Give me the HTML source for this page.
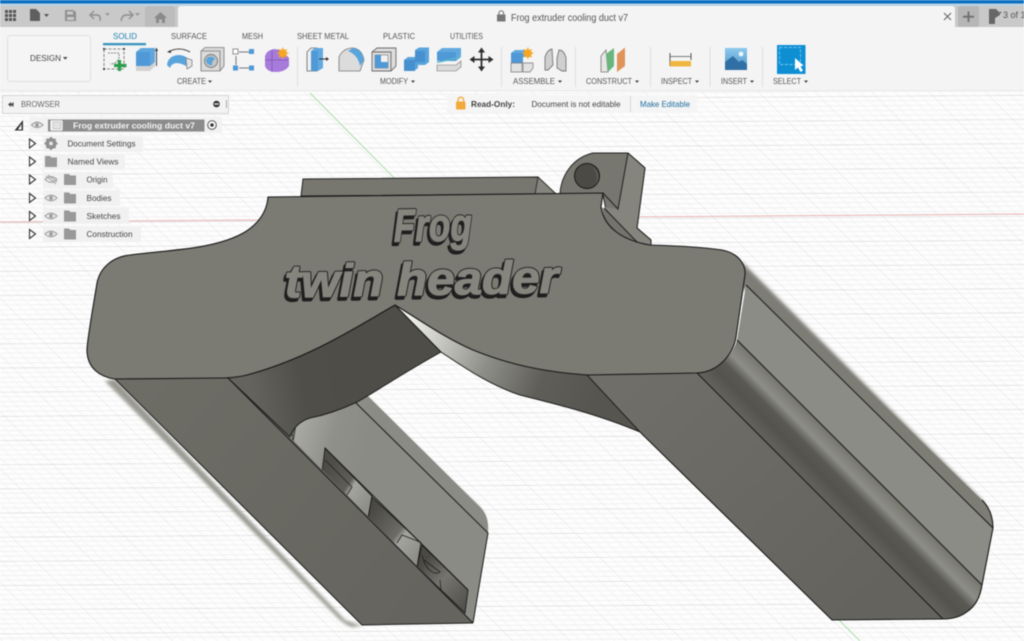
<!DOCTYPE html>
<html><head><meta charset="utf-8"><style>
html,body{margin:0;padding:0;background:#fff;width:1024px;height:641px;overflow:hidden}
svg{display:block;filter:blur(.45px)}
text{font-family:"Liberation Sans",sans-serif}
.l{font-size:8.5px;fill:#555}
.t{font-size:8.5px;fill:#555}
.b{font-size:8.5px;fill:#444}
</style></head><body>
<svg width="1024" height="641" viewBox="0 0 1024 641" xmlns="http://www.w3.org/2000/svg">
<defs>
<pattern id="grid" width="56.36" height="24" patternUnits="userSpaceOnUse" patternTransform="matrix(1 -0.0068 1 1 47 5)">
<g stroke="#eeeeee" stroke-width=".7" fill="none">
<path d="M0,4.8H56.36M0,9.6H56.36M0,14.4H56.36M0,19.2H56.36"/>
<path d="M11.27,0V24M22.54,0V24M33.81,0V24M45.08,0V24"/>
</g>
<path d="M0,0H56.36" stroke="#d4d4d4" stroke-width="1"/>
<path d="M0,0V24" stroke="#d0d0d0" stroke-width=".75"/>
</pattern>
<linearGradient id="arch" gradientUnits="userSpaceOnUse" x1="410" y1="320" x2="600" y2="400"><stop offset="0" stop-color="#f0f1ec"/><stop offset=".2" stop-color="#c2c3bc"/><stop offset=".42" stop-color="#8f8f89"/><stop offset=".7" stop-color="#5f5e58"/><stop offset="1" stop-color="#56554f"/></linearGradient>
<linearGradient id="darkin" gradientUnits="userSpaceOnUse" x1="250" y1="380" x2="420" y2="350"><stop offset="0" stop-color="#64635d"/><stop offset=".3" stop-color="#4f4e49"/><stop offset="1" stop-color="#4e4d47"/></linearGradient>
<linearGradient id="fillet" gradientUnits="userSpaceOnUse" x1="826" y1="502" x2="862.5" y2="465.5"><stop offset="0" stop-color="#64635d"/><stop offset=".3" stop-color="#54534d"/><stop offset=".52" stop-color="#5a5953"/><stop offset=".72" stop-color="#8d8e88"/><stop offset=".86" stop-color="#83837c"/><stop offset="1" stop-color="#75756e"/></linearGradient>
<linearGradient id="armR" gradientUnits="userSpaceOnUse" x1="640" y1="380" x2="860" y2="620"><stop offset="0" stop-color="#6f6e68"/><stop offset="1" stop-color="#64635d"/></linearGradient>
<linearGradient id="armL" gradientUnits="userSpaceOnUse" x1="150" y1="390" x2="430" y2="620"><stop offset="0" stop-color="#6d6c65"/><stop offset="1" stop-color="#65645e"/></linearGradient>
<linearGradient id="inner" gradientUnits="userSpaceOnUse" x1="300" y1="420" x2="370" y2="440"><stop offset="0" stop-color="#a8a9a3"/><stop offset=".5" stop-color="#8f908a"/><stop offset="1" stop-color="#8a8b84"/></linearGradient>
<linearGradient id="cavA" gradientUnits="userSpaceOnUse" x1="325" y1="470" x2="370" y2="500"><stop offset="0" stop-color="#4d4c47"/><stop offset=".5" stop-color="#5e5d58"/><stop offset=".6" stop-color="#a3a49e"/><stop offset="1" stop-color="#8f908a"/></linearGradient>
<linearGradient id="cavB" gradientUnits="userSpaceOnUse" x1="372" y1="510" x2="420" y2="550"><stop offset="0" stop-color="#4a4944"/><stop offset=".55" stop-color="#6c6b66"/><stop offset=".65" stop-color="#a3a49e"/><stop offset="1" stop-color="#8f908a"/></linearGradient>
<linearGradient id="cavC" gradientUnits="userSpaceOnUse" x1="425" y1="560" x2="468" y2="600"><stop offset="0" stop-color="#4a4944"/><stop offset=".45" stop-color="#75746f"/><stop offset="1" stop-color="#54534e"/></linearGradient>
<linearGradient id="selg" x1="0" y1="0" x2="0" y2="1"><stop offset="0" stop-color="#8cc9ee"/><stop offset="1" stop-color="#4e94c4"/></linearGradient>
<filter id="bl"><feGaussianBlur stdDeviation="1.6"/></filter>
</defs>

<!-- canvas -->
<rect width="1024" height="641" fill="#fdfdfd"/>
<rect width="1024" height="641" fill="url(#grid)"/>
<path d="M0,222 L1024,214" stroke="#e6b3b3" stroke-width="1"/>
<path d="M310,93 L412,196 M838,619 L860,641" stroke="#a7dca7" stroke-width="1"/>

<!-- back block -->
<path d="M303,179 L538,177 L556,194 L301,196Z" fill="#77766f" stroke="#222" stroke-width="1"/>
<path d="M538,177 L556,194 L535,194Z" fill="#85857d" stroke="#222" stroke-width=".8"/>
<!-- tab -->
<path d="M560,194 C561,176 572,158 593,153 L628,153 L645,168 L637,228 L651,240 L651,245 L610,230 L603,195Z" fill="#77766f" stroke="#222" stroke-width="1"/>
<path d="M628,153 L645,168 L637,228 L651,240 L651,245 L638,243 L604,207 L618,209Z" fill="#85857d"/>
<path d="M602,207 L638,243 L651,245 L625,241 C612,235 604,222 602,207Z" fill="#74736c"/>
<path d="M628,153 L618,209 L603,193 M628,153 L645,168 L637,228 L651,240 L651,245 M604,208 L638,243" stroke="#222" stroke-width="1" fill="none"/>
<ellipse cx="587" cy="176" rx="12.5" ry="12.5" fill="#4b4a45" stroke="#1c1c1c" stroke-width="1"/>
<path d="M592,167 A12,12 0 0 1 595,185 A13,13 0 0 0 592,167Z" fill="#8a8a83"/>

<!-- soft halos of arms -->
<path d="M115,379 L345,620 L362,626 L352,627 C344,624 340,620 335,615 L105,381Z" fill="#9a9a93" filter="url(#bl)"/>
<path d="M355,396 L478,506 L486,520 L470,520 L350,405Z" fill="#8b8b84" filter="url(#bl)"/>
<path d="M742,262 L982,500 L990,515 L980,520 L740,285Z" fill="#81817a" filter="url(#bl)"/>

<!-- left arm interior -->
<path d="M290,437 C293,428 300,421 310,418 C330,414 345,408 357,402 L368,396 L478,505 C486,512 489,520 488,533 L473,623Z" fill="url(#inner)"/>
<path d="M355,402 L488,533 L473,623" stroke="#1d1d1d" stroke-width="1" fill="none"/>
<path d="M325,448 L322,472 L368,518 L372,496Z" fill="url(#cavA)" stroke="#1d1d1d" stroke-width=".9"/>
<path d="M372,497 L368,518 L417,567 L421,543Z" fill="url(#cavB)" stroke="#1d1d1d" stroke-width=".9"/>
<path d="M422,545 L417,567 L465,613 L468,590Z" fill="url(#cavC)" stroke="#1d1d1d" stroke-width=".9"/>
<path d="M325,460 L352,487 L347,495 M397,543 L402,535 L420,542 M422,555 C425,570 435,576 440,572 L424,560 M440,580 L441,590" stroke="#222" stroke-width=".8" fill="none"/>
<path d="M325,448 L468,590" stroke="#1a1a1a" stroke-width="1" fill="none"/>
<path d="M292,435 C290,430 292,428 296,424 L293,443Z" fill="#6e6d67" stroke="#222" stroke-width=".7"/>

<!-- left arm bottom -->
<path d="M115,379 L228,378 L290,437 L473,623 L362,625Z" fill="url(#armL)"/>
<path d="M115,379 L362,625 L473,623 M228,378 L473,623" stroke="#1d1d1d" stroke-width="1" fill="none"/>

<!-- dark inner surface -->
<path d="M395,305 L441,352 C400,375 375,392 357,402 C340,410 325,415 310,418 C300,421 293,428 290,437 L228,378 L247,375 C310,358 360,325 395,305Z" fill="url(#darkin)" stroke="#1d1d1d" stroke-width="1"/>

<!-- right arm bands -->
<path d="M746,272 L982,500 C990,508 993,518 993,528 L746,285Z" fill="#7d7d75"/>
<path d="M746,285 L993,528 L982,585 L737,340Z" fill="#8b8c85"/>
<path d="M737,340 L982,585 C980,598 975,606 968,611 C962,616 953,619 943,619 L697,373 C718,372 733,355 737,340Z" fill="url(#fillet)"/>
<path d="M587,375 L697,373 L943,619 L832,620 L640,432Z" fill="url(#armR)"/>
<path d="M746,285 L993,528 M737,340 L982,585 M697,373 L943,619" stroke="#181818" stroke-width="1" fill="none"/>
<path d="M640,432 L832,620 L943,619 C953,619 962,616 968,611 C975,606 980,598 982,585 L993,528 C993,518 990,508 982,500" stroke="#181818" stroke-width="1.1" fill="none"/>

<!-- arch light surface -->
<path d="M395,305 C420,320 445,338 473,350 C510,365 545,372 587,375 L640,432 C600,415 560,405 520,395 C490,385 465,368 441,352Z" fill="url(#arch)"/>
<path d="M395,305 L441,352 C465,368 490,385 520,395 C560,405 600,415 640,432 L587,375" stroke="#1d1d1d" stroke-width="1" fill="none"/>

<!-- main face -->
<path d="M268,197 L603,193 L601,207 C604,226 620,240 650,245 C680,246 700,247 722,250 C738,253 746,264 745,275 L736,337 C733,355 718,372 697,373 L587,375 C545,372 510,365 473,350 C445,338 420,320 395,305 C360,325 310,358 247,375 C240,377 228,378 222,378 L115,379 C100,377 87,368 87,350 C87,340 96,290 97,283 C100,268 112,257 130,255 C165,250 215,250 245,232 C258,224 267,212 268,197Z" fill="#7b7a73" stroke="#181818" stroke-width="1.1"/>

<!-- raised text -->
<g font-family="'Liberation Sans',sans-serif" font-weight="700" font-style="italic" stroke-linejoin="round">
<g transform="rotate(-1 430 240)">
<text x="392" y="244" font-size="46" textLength="78" lengthAdjust="spacingAndGlyphs" fill="#3a3935" stroke="#1e1e1e" stroke-width="3">Frog</text>
<text x="394" y="241" font-size="46" textLength="78" lengthAdjust="spacingAndGlyphs" fill="#1e1e1e" stroke="#1e1e1e" stroke-width="3">Frog</text>
<text x="394" y="241" font-size="46" textLength="78" lengthAdjust="spacingAndGlyphs" fill="#85847d" stroke="#85847d" stroke-width="1.300">Frog</text>
</g>
<g transform="rotate(-1 420 295)">
<text x="283" y="298" font-size="46" textLength="274" lengthAdjust="spacingAndGlyphs" fill="#3a3935" stroke="#1e1e1e" stroke-width="3">twin header</text>
<text x="285" y="295" font-size="46" textLength="274" lengthAdjust="spacingAndGlyphs" fill="#1e1e1e" stroke="#1e1e1e" stroke-width="3">twin header</text>
<text x="285" y="295" font-size="46" textLength="274" lengthAdjust="spacingAndGlyphs" fill="#85847d" stroke="#85847d" stroke-width="1.300">twin header</text>
</g>
</g>

<!-- top chrome -->
<rect y="27" width="1024" height="64" fill="#f4f4f4"/>
<rect y="90" width="1024" height="1.5" fill="#ececec"/>
<rect y="0" width="1024" height="3.5" fill="#0b6fc2"/>
<rect y="3.5" width="1024" height="2.5" fill="#b9d2e3"/>
<rect y="6" width="1024" height="21" fill="#c9c9c9"/>
<path d="M178,27 V9 Q178,6 181,6 H952 Q955,6 955,9 V27Z" fill="#f4f4f4"/>
<path d="M145,27 V9 Q145,6 148,6 H172 Q175,6 175,9 V27Z" fill="#bcbcbc"/>
<rect x="958" y="6" width="21" height="21" fill="#b6b6b6" rx="2"/>

<!-- grid menu -->
<g fill="#555"><rect x="5" y="10" width="3" height="3"/><rect x="9" y="10" width="3" height="3"/><rect x="13" y="10" width="3" height="3"/><rect x="5" y="14" width="3" height="3"/><rect x="9" y="14" width="3" height="3"/><rect x="13" y="14" width="3" height="3"/><rect x="5" y="18" width="3" height="3"/><rect x="9" y="18" width="3" height="3"/><rect x="13" y="18" width="3" height="3"/></g>
<path d="M30,9 H36 L40,13 V21 H30Z" fill="#5f5f5f"/><path d="M44,14 h5 l-2.5,3z" fill="#555"/>
<path d="M65,10 H73 L76,12 V21 H65Z M67,11.5 V14.5 H73 V11.5Z M67,17 V20 H74 V17Z" fill="#8f8f8f" fill-rule="evenodd"/>
<path d="M94,11 L90,15 L94,19 M90.5,15 H97 Q101,15 100,21" fill="none" stroke="#8f8f8f" stroke-width="1.4"/>
<path d="M105,13 h5 l-2.5,3z" fill="#999"/>
<path d="M129,11 L133,15 L129,19 M132.5,15 H126 Q122,15 121,21" fill="none" stroke="#8f8f8f" stroke-width="1.4"/>
<path d="M135,13 h5 l-2.5,3z" fill="#999"/>
<path d="M160.500,12 L167,18 H165 V23 H162 V19.500 H159 V23 H156 V18 H154Z" fill="#8a8a8a"/>

<!-- title -->
<path d="M497,14.500 H505.500 V21.500 H497Z" fill="#777"/><path d="M499,14.500 V13 a2.200,2.200 0 0 1 4.500,0 V14.500" fill="none" stroke="#777" stroke-width="1.100"/>
<text x="511" y="21" font-size="10.500" fill="#555" textLength="117" lengthAdjust="spacingAndGlyphs">Frog extruder cooling duct v7</text>
<path d="M944,13 L951,20 M951,13 L944,20" stroke="#666" stroke-width="1.100"/>
<path d="M968.500,11.500 V22 M963,16.700 H974" stroke="#6e6e6e" stroke-width="1.800"/>
<path d="M989,9 H996 L999,12 L1000,15 L995,18 L995,24 H989Z" fill="#666"/><path d="M996,16 L1001,12" stroke="#666" stroke-width="1.500"/>
<text x="1003" y="18" font-size="9" fill="#555">3 of 1</text>

<!-- design button -->
<rect x="7.500" y="35.500" width="83" height="46" rx="3" fill="#f5f5f5" stroke="#e0e0e0"/>
<text x="30" y="61" font-size="8.500" fill="#444" textLength="31" lengthAdjust="spacingAndGlyphs">DESIGN</text>
<path d="M63,57 h4.500 l-2.250,2.600z" fill="#444"/>

<!-- tabs -->
<text x="113" y="39" class="t" style="fill:#1f7fb0" textLength="24" lengthAdjust="spacingAndGlyphs">SOLID</text>
<rect x="103" y="43" width="43" height="2.300" fill="#3b93bd"/>
<text x="171" y="39" class="t" textLength="36" lengthAdjust="spacingAndGlyphs">SURFACE</text>
<text x="242" y="39" class="t" textLength="21" lengthAdjust="spacingAndGlyphs">MESH</text>
<text x="297" y="39" class="t" textLength="52" lengthAdjust="spacingAndGlyphs">SHEET METAL</text>
<text x="383" y="39" class="t" textLength="32" lengthAdjust="spacingAndGlyphs">PLASTIC</text>
<text x="450" y="39" class="t" textLength="33" lengthAdjust="spacingAndGlyphs">UTILITIES</text>

<!-- group labels -->
<g>
<text x="177" y="84" class="l" textLength="29" lengthAdjust="spacingAndGlyphs">CREATE</text><path d="M208,80.500 h4 l-2,2.400z" fill="#444"/>
<text x="380" y="84" class="l" textLength="28" lengthAdjust="spacingAndGlyphs">MODIFY</text><path d="M411,80.500 h4 l-2,2.400z" fill="#444"/>
<text x="513" y="84" class="l" textLength="42" lengthAdjust="spacingAndGlyphs">ASSEMBLE</text><path d="M558,80.500 h4 l-2,2.400z" fill="#444"/>
<text x="586" y="84" class="l" textLength="46" lengthAdjust="spacingAndGlyphs">CONSTRUCT</text><path d="M635,80.500 h4 l-2,2.400z" fill="#444"/>
<text x="661" y="84" class="l" textLength="31" lengthAdjust="spacingAndGlyphs">INSPECT</text><path d="M695,80.500 h4 l-2,2.400z" fill="#444"/>
<text x="721" y="84" class="l" textLength="26" lengthAdjust="spacingAndGlyphs">INSERT</text><path d="M750,80.500 h4 l-2,2.400z" fill="#444"/>
<text x="773" y="84" class="l" textLength="28" lengthAdjust="spacingAndGlyphs">SELECT</text><path d="M804,80.500 h4 l-2,2.400z" fill="#444"/>
</g>
<path d="M297.500,47 V87 M501.500,47 V87 M575.500,47 V87 M650.500,47 V87 M710,47 V87 M762.500,47 V87" stroke="#dedede"/>

<!-- CREATE icons -->
<g fill="none" stroke="#666" stroke-width=".8">
<rect x="104" y="49" width="20" height="20" stroke-dasharray="3 1.500"/>
<path d="M108,53 H119 V58 Q117,64 110,64" stroke-dasharray="2 1"/>
</g>
<g fill="#444"><circle cx="104" cy="49" r="1.100"/><circle cx="124" cy="49" r="1.100"/><circle cx="104" cy="69" r="1.100"/></g>
<path d="M119.500,60 V71 M114,65.500 H126.500" stroke="#2d9b4f" stroke-width="3.200"/>
<path d="M136,52 L141,48 H155 V66 L150,71 H136Z" fill="#d2d2d2"/>
<path d="M136,52 L141,48 H155 V62 L150,66 H136Z" fill="#5fa6dd"/><path d="M136,52 H150 V66 H136Z" fill="#4f99d6"/>
<path d="M156.500,49 V66" stroke="#444"/><path d="M155,51 L156.500,47.500 L158,51Z" fill="#333"/>
<path d="M168,52 Q179,46 190,52" fill="none" stroke="#444"/><path d="M167,52 l4,-2 v3z" fill="#333"/>
<path d="M167,65 Q168,56 178,55 Q185,55 188,59 L186,66 Q181,63 176,63 Q171,64 170,68Z" fill="#5aa4dc"/>
<path d="M186,58 L192,60 V66 L187,69Z" fill="#e2e2e2" stroke="#777" stroke-width=".7"/>
<path d="M201,51 L205,47.500 H224 V66 L220,71 H201Z" fill="#dadada" stroke="#7a7a7a" stroke-width=".8"/>
<path d="M201,51 H220 V71" fill="none" stroke="#7a7a7a" stroke-width=".8"/>
<circle cx="211" cy="61" r="6.500" fill="#c5c5c5" stroke="#777" stroke-width=".9"/><path d="M206,60 a5,5 0 0 1 9,-1 a6,6 0 0 0 -3,6 a5,5 0 0 1 -6,-5z" fill="#5aa4dc"/>
<path d="M239,52 H249 M236,56 V65 M239,68 H249" stroke="#777"/>
<rect x="233" y="49" width="5" height="5" fill="#fff" stroke="#777" stroke-width=".8"/>
<rect x="249" y="49" width="5" height="5" fill="#4f99d6"/><rect x="233" y="65.500" width="5" height="5" fill="#4f99d6"/><rect x="249" y="65.500" width="5" height="5" fill="#4f99d6"/>
<path d="M265,56 Q267,50 274,49 L282,50 L289,58 V66 Q285,72 276,72 Q267,72 265,66Z" fill="#a77bdb"/>
<path d="M272,50 V72 M265,60 H288" stroke="#7f58b5" stroke-width=".8"/>
<path d="M283,47 l1,3 3,-1 -1,3 3,1 -3,1.500 1,3 -3,-1 -1,3 -1.500,-3 -3,1 1,-3 -3,-1.500 3,-1 -1,-3 3,1z" fill="#f6a623"/>

<!-- MODIFY icons -->
<path d="M307,52 L311,48 H317 V71 H307Z" fill="#efefef" stroke="#666" stroke-width=".8"/>
<path d="M311,51 L315,48 H323 V68 L318,71 H311Z" fill="#62a9e0"/><path d="M311,51 H318 V71 H311Z" fill="#4f99d6"/>
<path d="M319,59 H327" stroke="#333"/><path d="M326,57 L329,59 L326,61Z" fill="#333"/>
<path d="M339,71 V57 Q343,48 353,48 Q362,49 364,60 L360,71Z" fill="#dcdcdc" stroke="#777" stroke-width=".8"/>
<path d="M353,48 Q362,49 364,60 L360,66 Q358,55 348,51Z" fill="#5aa4dc"/>
<path d="M372,52 L377,48 H396 V66 L391,71 H372Z" fill="#dcdcdc" stroke="#6b6b6b" stroke-width=".9"/>
<path d="M372,52 H391 V71" fill="none" stroke="#6b6b6b" stroke-width=".9"/>
<rect x="375" y="55" width="13" height="13" fill="#f2f2f2" stroke="#777" stroke-width=".6"/>
<path d="M375,55 H381 V62 H388 V68 H375Z" fill="#4f99d6"/>
<path d="M404,60 L408,57 H415 V50 L419,47.500 H429 V62 L425,65 H418 V68 L414,71 H404Z" fill="#5aa4dc"/>
<path d="M404,60 H415 V71 H404Z M415,51 H425 V62 H415Z" fill="#4790cf"/>
<path d="M437,52 L442,48 H461 V57 L456,61 H437Z" fill="#62a9e0"/><path d="M437,52 H456 V61 H437Z" fill="#4f99d6"/>
<path d="M437,62.500 Q449,60 460,57" stroke="#59b6c9" stroke-width="1.400" fill="none"/>
<path d="M437,65 H456 L461,61 V67 L456,71 H437Z" fill="#dadada" stroke="#777" stroke-width=".6"/>
<path d="M481.500,50 V69 M472,59.500 H491" stroke="#2e2e2e" stroke-width="1.800"/>
<path d="M481.500,47.500 L485,52.500 H478Z M481.500,71.500 L485,66.500 H478Z M469.500,59.500 L474.500,56 V63Z M493.500,59.500 L488.500,56 V63Z" fill="#2e2e2e"/>

<!-- ASSEMBLE icons -->
<path d="M511,53 L515,50 H530 V57 H511Z" fill="#62a9e0"/><rect x="511" y="53" width="12" height="10" fill="#4f99d6"/>
<path d="M511,63 H522 V72 H511Z" fill="#e2e2e2" stroke="#777" stroke-width=".7"/><path d="M523,63 H533 V68 L530,72 H523Z" fill="#e2e2e2" stroke="#777" stroke-width=".7"/>
<path d="M528,47 l1,3 3,-1 -1,3 3,1 -3,1.500 1,3 -3,-1 -1,3 -1.500,-3 -3,1 1,-3 -3,-1.500 3,-1 -1,-3 3,1z" fill="#f6a623"/>
<path d="M545,57 Q547,50 552,49 L553,65 L548,70 H545Z M566,58 Q564,50 559,50 L557,58 V68 L562,71 H566Z" fill="#cfcfcf" stroke="#777" stroke-width=".9"/>

<!-- CONSTRUCT icon -->
<path d="M601,56 L606,50 L608,72 H601Z" fill="#e6e6e6" stroke="#777" stroke-width=".8"/>
<path d="M606,54 L614,48 V66 L608,72Z" fill="#68b57d"/>
<path d="M617,54 L625,47.500 V66 L617,72Z" fill="#e0935a"/>

<!-- INSPECT icon -->
<path d="M670,53 V66 M691,53 V60" stroke="#555"/><path d="M670,56.500 H691" stroke="#555" stroke-width=".8"/>
<rect x="670" y="61" width="21" height="5.500" fill="#efb640"/>

<!-- INSERT icon -->
<rect x="725" y="48" width="22" height="22" fill="url(#selg)"/>
<path d="M725,68 V62 L733,56 L739,62 L742,60 L747,64 V70 H725Z" fill="#2f6fa5"/>
<circle cx="741" cy="54" r="2.400" fill="#eaf5fc"/>

<!-- SELECT icon -->
<rect x="777" y="45" width="28.500" height="29" fill="#0e8fd4"/>
<rect x="779.500" y="47.500" width="21" height="17" fill="none" stroke="#7cc5ee" stroke-width=".9" stroke-dasharray="3 1.600"/>
<path d="M795,58 L795,70 L798,67.500 L800.500,72 L803,70.500 L800.500,66.500 L803.500,65.500Z" fill="#fff"/>

<!-- browser panel -->
<rect x="2.500" y="95.500" width="226" height="18" fill="#f3f3f3" stroke="#d6d6d6"/>
<path d="M8,104.500 L11,102 V107Z M10.500,104.500 L13.500,102 V107Z" fill="#444"/>
<text x="21" y="107" font-size="8.500" fill="#666" textLength="39" lengthAdjust="spacingAndGlyphs">BROWSER</text>
<circle cx="216.500" cy="104" r="3.300" fill="#333"/><rect x="214.300" y="103.400" width="4.400" height="1.200" fill="#fff"/>
<path d="M226.500,100 V108" stroke="#aaa"/>

<!-- tree -->
<g fill="#f1f1f1" opacity=".95">
<rect x="29" y="117" width="193" height="16"/>
<rect x="43" y="136" width="100" height="16"/>
<rect x="43" y="154" width="82" height="16"/>
<rect x="43" y="172" width="70" height="16"/>
<rect x="43" y="190" width="77" height="16"/>
<rect x="43" y="208" width="86" height="16"/>
<rect x="43" y="226" width="98" height="16"/>
</g>
<path d="M23,120 V130.500 H14.500Z M21.500,124 V129.500 H18Z" fill="#333" fill-rule="evenodd"/>
<g fill="none" stroke="#9a9a9a" stroke-width="1.100"><path d="M31.500,125 Q37,119.500 43,125 Q37,130 31.500,125Z"/></g><circle cx="37" cy="125" r="1.900" fill="#9a9a9a"/>
<rect x="48" y="119.500" width="156.500" height="12" fill="#8c8c8c"/>
<rect x="50" y="120" width="13" height="11" rx="1.500" fill="#f5f5f5" stroke="#888" stroke-width=".6"/>
<path d="M53,122 H61 V129 H53Z" fill="#e2e2e2" stroke="#aaa" stroke-width=".5"/>
<text x="73" y="128.500" font-size="8.500" font-weight="700" fill="#f4f4f4" textLength="122" lengthAdjust="spacingAndGlyphs">Frog extruder cooling duct v7</text>
<circle cx="212" cy="125" r="4.300" fill="#fff" stroke="#444" stroke-width=".9"/><circle cx="212" cy="125" r="1.800" fill="#333"/>

<!-- expand triangles -->
<g fill="#fff" stroke="#333" stroke-width="1.100">
<path d="M29.500,139 L35.500,143.500 L29.500,148Z"/>
<path d="M29.500,157 L35.500,161.500 L29.500,166Z"/>
<path d="M29.500,175 L35.500,179.500 L29.500,184Z"/>
<path d="M29.500,193.500 L35.500,198 L29.500,202.500Z"/>
<path d="M29.500,211.500 L35.500,216 L29.500,220.500Z"/>
<path d="M29.500,229.500 L35.500,234 L29.500,238.500Z"/>
</g>
<!-- gear -->
<circle cx="51" cy="143.500" r="4.300" fill="none" stroke="#8d8d8d" stroke-width="2.400"/>
<path d="M51,137 V150 M44.500,143.500 H57.500 M46.500,139 L55.500,148 M55.500,139 L46.500,148" stroke="#8d8d8d" stroke-width="1.800"/>
<circle cx="51" cy="143.500" r="1.700" fill="#f1f1f1"/>
<!-- folders -->
<g fill="#999">
<path d="M45,156 H50 L51.500,157.500 H57 V167 H45Z"/>
<path d="M64,174 H69 L70.500,175.500 H76 V185 H64Z"/>
<path d="M64,192.500 H69 L70.500,194 H76 V203.500 H64Z"/>
<path d="M64,210.500 H69 L70.500,212 H76 V221.500 H64Z"/>
<path d="M64,228.500 H69 L70.500,230 H76 V239.500 H64Z"/>
</g>
<!-- eyes -->
<g fill="none" stroke="#a0a0a0" stroke-width="1.100">
<path d="M45,179.500 Q51,174 57,179.500 Q51,185 45,179.500Z M46,176 L56,184 M48,175 L57,182"/>
<path d="M45,198 Q51,192.500 57,198 Q51,203.500 45,198Z"/>
<path d="M45,216 Q51,210.500 57,216 Q51,221.500 45,216Z"/>
<path d="M45,234 Q51,228.500 57,234 Q51,239.500 45,234Z"/>
</g>
<g fill="#a0a0a0"><circle cx="51" cy="198" r="2"/><circle cx="51" cy="216" r="2"/><circle cx="51" cy="234" r="2"/></g>
<!-- tree labels -->
<text x="67.500" y="146.500" class="b" textLength="68" lengthAdjust="spacingAndGlyphs">Document Settings</text>
<text x="67.500" y="164.500" class="b" textLength="51" lengthAdjust="spacingAndGlyphs">Named Views</text>
<text x="86.500" y="182.500" class="b" textLength="21" lengthAdjust="spacingAndGlyphs">Origin</text>
<text x="86.500" y="201" class="b" textLength="25" lengthAdjust="spacingAndGlyphs">Bodies</text>
<text x="86.500" y="219" class="b" textLength="34" lengthAdjust="spacingAndGlyphs">Sketches</text>
<text x="86.500" y="237" class="b" textLength="46" lengthAdjust="spacingAndGlyphs">Construction</text>

<!-- read only bar -->
<rect x="447" y="95" width="250" height="18" fill="#f5f5f5"/>
<path d="M630.500,96 V112" stroke="#d8d8d8"/>
<rect x="456" y="101.500" width="9.500" height="8" rx="1" fill="#f2a93b"/>
<path d="M458,101.500 V100 a2.800,2.800 0 0 1 5.600,0 V101.500" fill="none" stroke="#f2a93b" stroke-width="1.300"/>
<text x="471" y="107" font-size="8.500" font-weight="700" fill="#444" textLength="44" lengthAdjust="spacingAndGlyphs">Read-Only:</text>
<text x="531.500" y="107" font-size="8.500" fill="#444" textLength="89" lengthAdjust="spacingAndGlyphs">Document is not editable</text>
<text x="640" y="107" font-size="8.500" fill="#1d6d9e" textLength="50" lengthAdjust="spacingAndGlyphs">Make Editable</text>
</svg>
</body></html>
